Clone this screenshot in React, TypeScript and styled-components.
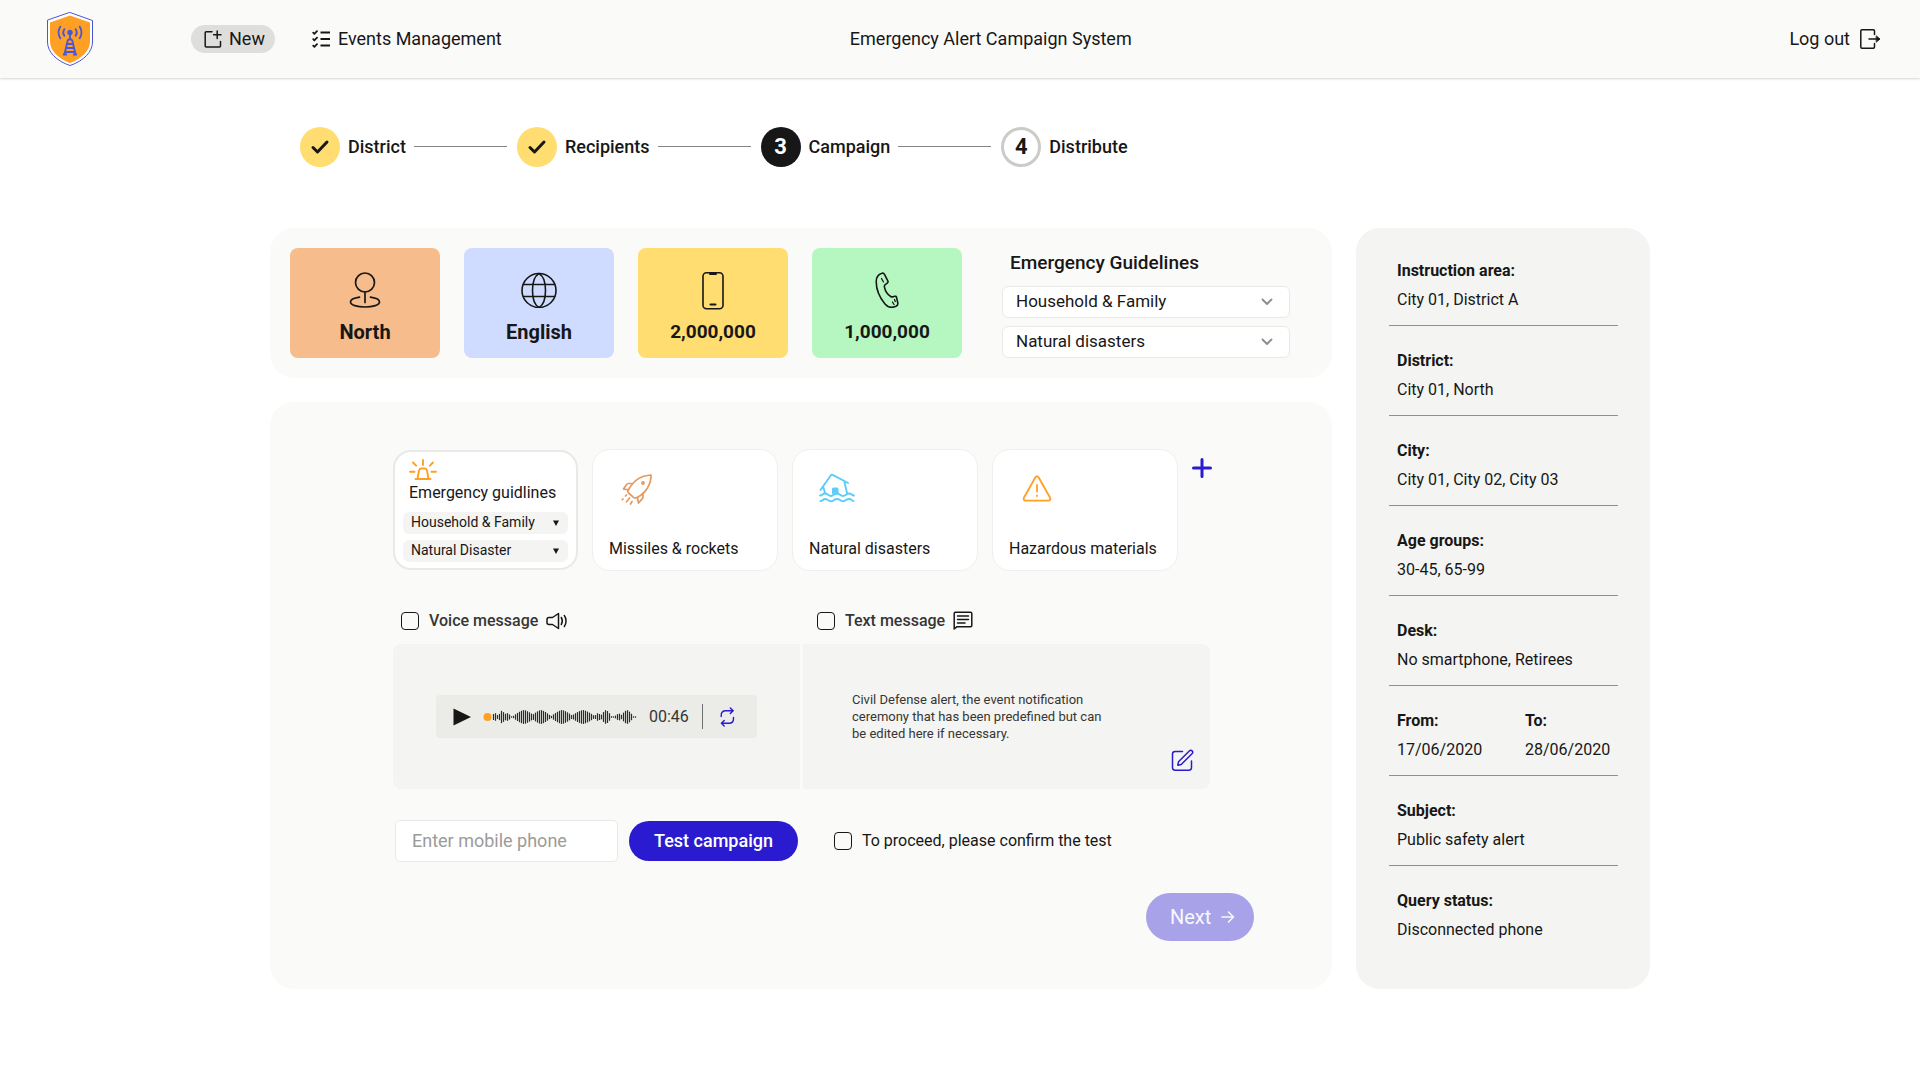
import React from "react";
import styled, { createGlobalStyle } from "styled-components";

const c = {
  ink: "#171717",
  soft: "#363635",
  panel: "#fafaf9",
  muted: "#f4f4f2",
  line: "#e9e9e7",
  rule: "#90908e",
  blue: "#2a1bd0",
  orange: "#ffa024",
};

const GlobalStyle = createGlobalStyle`
  *, *::before, *::after { box-sizing: border-box; }
  body {
    margin: 0;
    background: #ffffff;
    color: ${c.ink};
    font-family: Roboto, "Liberation Sans", sans-serif;
    font-size: 16px;
    line-height: 22px;
  }
  button, input, select { font: inherit; color: inherit; }
  h1, h2, p, dl, dd, dt, ol { margin: 0; padding: 0; }
  svg { display: block; flex: none; }
`;

/* ---------- Header ---------- */

const Header = styled.header`
  display: grid;
  grid-template-columns: 15fr auto 14fr;
  align-items: center;
  height: 78px;
  padding: 0 39px 0 47px;
  background: ${c.panel};
  box-shadow: 0 1px 2px rgba(0, 0, 0, 0.16);
  font-size: 18px;
`;

const Nav = styled.nav`
  display: flex;
  align-items: center;
`;

const LogoLink = styled.a`
  margin-right: 98px;
`;

const NavLink = styled.a<{ $active?: boolean }>`
  display: flex;
  align-items: center;
  gap: 7px;
  height: 28px;
  margin-right: 24px;
  padding: 0 10px 0 13px;
  border-radius: 14px;
  background: ${(p) => (p.$active ? "#dededc" : "transparent")};
  color: inherit;
  text-decoration: none;
`;

const Title = styled.h1`
  font-size: 18px;
  font-weight: 400;
`;

const LogOut = styled.button`
  display: flex;
  align-items: center;
  gap: 10px;
  justify-self: end;
  padding: 0;
  border: 0;
  background: none;
  cursor: pointer;
`;

/* ---------- Page ---------- */

const Page = styled.main`
  max-width: 1380px;
  margin: 0 auto;
  padding-bottom: 48px;
`;

const Steps = styled.ol`
  display: flex;
  align-items: center;
  gap: 10px;
  padding: 49px 30px 61px;
  list-style: none;
`;

const Step = styled.li`
  display: flex;
  align-items: center;
  gap: 8px;
  font-size: 18px;
  font-weight: 500;
`;

const StepLine = styled.span`
  width: 93px;
  height: 2px;
  border-top: 1px solid #858583;
`;

type StepState = "done" | "current" | "todo";

const StepBadge = styled.span<{ $state: StepState }>`
  display: grid;
  place-items: center;
  width: 40px;
  height: 40px;
  border-radius: 50%;
  border: ${(p) => (p.$state === "todo" ? "3px solid #cbcbc9" : "0")};
  background: ${(p) =>
    p.$state === "done" ? "#ffdd70" : p.$state === "current" ? c.ink : "#ffffff"};
  color: ${(p) => (p.$state === "current" ? "#ffffff" : c.ink)};
  font-size: 22px;
  font-weight: 700;
`;

const Layout = styled.div`
  display: grid;
  grid-template-columns: minmax(0, 1fr) 294px;
  gap: 24px;
`;

const Column = styled.div`
  display: flex;
  flex-direction: column;
  gap: 24px;
`;

/* ---------- Summary ---------- */

const Summary = styled.section`
  display: flex;
  gap: 24px;
  padding: 20px;
  border-radius: 24px;
  background: ${c.panel};
`;

const Tile = styled.div<{ $color: string; $count?: boolean }>`
  display: flex;
  flex-direction: column;
  align-items: center;
  gap: 13px;
  width: 150px;
  height: 110px;
  padding-top: 24px;
  border-radius: 8px;
  background: ${(p) => p.$color};
  font-size: ${(p) => (p.$count ? 19 : 20)}px;
  font-weight: 700;
`;

const Guidelines = styled.div`
  display: flex;
  flex-direction: column;
  gap: 8px;
  width: 288px;
  margin-left: 16px;
`;

const GuidelinesTitle = styled.h2`
  padding: 4px 8px;
  font-size: 19px;
  font-weight: 500;
`;

const SelectBox = styled.div`
  display: grid;
  align-items: center;

  & > * { grid-area: 1 / 1; }
  & > svg { justify-self: end; pointer-events: none; }
`;

const LargeSelectBox = styled(SelectBox)`
  & > svg { margin-right: 17px; }
`;

const LargeSelect = styled.select`
  appearance: none;
  width: 100%;
  height: 32px;
  padding: 0 40px 2px 13px;
  border: 1px solid ${c.line};
  border-radius: 6px;
  background: #ffffff;
  font-size: 17px;
`;

/* ---------- Campaign ---------- */

const Campaign = styled.section`
  flex: 1;
  padding: 47px 78px 48px 123px;
  border-radius: 24px;
  background: ${c.panel};
`;

const Scenarios = styled.div`
  display: flex;
  align-items: center;
  gap: 14px;
`;

const ScenarioCard = styled.button`
  display: flex;
  flex-direction: column;
  justify-content: space-between;
  align-items: flex-start;
  width: 186px;
  height: 122px;
  padding: 23px 16px 10px;
  border: 1px solid #efefed;
  border-radius: 18px;
  background: #ffffff;
  cursor: pointer;

  & > svg { margin-left: 10px; }
`;

const ActiveCard = styled.div`
  display: flex;
  flex-direction: column;
  width: 185px;
  height: 120px;
  padding: 7px 8px;
  border: 2px solid ${c.line};
  border-radius: 18px;
  background: #ffffff;
`;

const ActiveHead = styled.div`
  display: flex;
  flex-direction: column;
  gap: 1px;
  padding: 0 6px 8px;
`;

const SmallSelects = styled.div`
  display: flex;
  flex-direction: column;
  gap: 6px;
`;

const SmallSelectBox = styled(SelectBox)`
  & > svg { margin-right: 9px; }
`;

const SmallSelect = styled.select`
  appearance: none;
  width: 100%;
  height: 22px;
  padding: 0 22px 2px 8px;
  border: 0;
  border-radius: 6px;
  background: ${c.muted};
  font-size: 14px;
  line-height: 20px;
`;

const AddButton = styled.button`
  align-self: flex-start;
  margin-top: 8px;
  padding: 0;
  border: 0;
  background: none;
  cursor: pointer;
`;

const Messages = styled.div`
  display: grid;
  grid-template-columns: 1fr 1fr;
  column-gap: 3px;
  row-gap: 12px;
  margin: 39px 44px 31px 0;
`;

const CheckLabel = styled.label`
  display: flex;
  align-items: center;
  gap: 10px;
`;

const MessageHead = styled.div`
  display: flex;
  align-items: center;
  gap: 8px;
  padding-left: 8px;
  color: ${c.soft};
  font-weight: 500;

  & + & { padding-left: 14px; }
`;

const Check = styled.input`
  appearance: none;
  flex: none;
  width: 18px;
  height: 18px;
  margin: 0;
  border: 1px solid ${c.ink};
  border-radius: 4px;
  background: ${c.panel};

  &:checked { background: ${c.blue}; }
`;

const MessagePanel = styled.div<{ $side: "left" | "right" }>`
  display: flex;
  height: 145px;
  border-radius: ${(p) => (p.$side === "left" ? "8px 0 0 8px" : "0 8px 8px 0")};
  background: ${c.muted};
`;

const VoicePanel = styled(MessagePanel)`
  align-items: center;
  padding: 0 43px;
`;

const TextPanel = styled(MessagePanel)`
  align-items: flex-end;
  justify-content: space-between;
  padding: 0 16px 17px 49px;
`;

const MessageText = styled.p`
  align-self: center;
  width: 260px;
  padding-top: 17px;
  color: ${c.soft};
  font-size: 13px;
  line-height: 17px;
`;

const IconButton = styled.button`
  padding: 0;
  border: 0;
  background: none;
  cursor: pointer;
`;

const Player = styled.div`
  display: flex;
  align-items: center;
  width: 321px;
  height: 43px;
  padding: 0 22px 0 17px;
  border-radius: 4px;
  background: #ebebe7;
`;

const Time = styled.span`
  margin: 0 13px 0 12px;
  color: ${c.soft};
`;

const Divider = styled.span`
  width: 1px;
  height: 25px;
  margin-right: 17px;
  background: #6f6f6d;
`;

const WaveWrap = styled.div`
  margin-left: 12px;
`;

const TestRow = styled.form`
  display: flex;
  align-items: center;
  padding-left: 2px;
`;

const PhoneInput = styled.input`
  width: 223px;
  height: 42px;
  padding: 0 16px 2px;
  border: 1px solid ${c.line};
  border-radius: 5px;
  background: #ffffff;
  font-size: 18px;

  &::placeholder { color: #9b9b99; opacity: 1; }
`;

const TestButton = styled.button`
  width: 169px;
  height: 40px;
  margin: 0 36px 0 11px;
  border: 0;
  border-radius: 20px;
  background: ${c.blue};
  color: #ffffff;
  font-size: 18px;
  font-weight: 500;
  cursor: pointer;
`;

const NextRow = styled.div`
  display: flex;
  justify-content: flex-end;
  margin-top: 31px;
`;

const NextButton = styled.button`
  display: flex;
  align-items: center;
  gap: 10px;
  width: 108px;
  height: 48px;
  padding: 0 0 0 24px;
  border: 0;
  border-radius: 24px;
  background: #a8a2e8;
  color: #f8f8fd;
  font-size: 20px;
`;

/* ---------- Details ---------- */

const Details = styled.aside`
  padding: 8px 32px 34px 33px;
  border-radius: 24px;
  background: ${c.muted};
`;

const DetailRow = styled.dl`
  display: grid;
  grid-template-columns: 128px 1fr;
  padding: 24px 0 14px 8px;
  border-bottom: 1px solid ${c.rule};

  &:last-child { border-bottom: 0; }
`;

const DetailItem = styled.div<{ $wide: boolean }>`
  grid-column: ${(p) => (p.$wide ? "1 / -1" : "auto")};
`;

const DetailName = styled.dt`
  margin-bottom: 7px;
  font-weight: 700;
`;

const DetailValue = styled.dd`
  white-space: nowrap;
`;

/* ---------- Icons ---------- */

type IconProps = {
  w: number;
  h: number;
  color?: string;
  stroke?: number;
  children: React.ReactNode;
};

const Icon = ({ w, h, color = c.ink, stroke = 1.5, children }: IconProps) => (
  <svg
    width={w}
    height={h}
    viewBox={`0 0 ${w} ${h}`}
    fill="none"
    stroke={color}
    strokeWidth={stroke}
    strokeLinecap="round"
    strokeLinejoin="round"
    aria-hidden="true"
  >
    {children}
  </svg>
);

const Logo = () => (
  <Icon w={46} h={54} color="#4a56d6" stroke={1}>
    <path d="M23 .5 45.5 8.500V30c0 10-9 19-22.500 23.500C9.500 49 .5 40 .5 30V8.500z" fill="#fff" />
    <path d="M23 3.500 43 10.500V29.500c0 9-8 17-20 21.500C11 46.500 3 38.500 3 29.500V10.500z" fill={c.orange} stroke="none" />
    <circle cx="23" cy="20.5" r="2.7" fill="#4a56d6" stroke="none" />
    <path d="M17.800 16.500a6.500 6.500 0 0 0 0 8M28.200 16.500a6.500 6.500 0 0 1 0 8M13.700 14a11 11 0 0 0 0 13M32.300 14a11 11 0 0 1 0 13" strokeWidth="1.9" strokeLinecap="butt" />
    <path d="M23 22v6M21 27.500h4M21 27.500 17.500 42M25 27.500 28.500 42M20.500 32h5M19.500 36h7M18.500 40h9M16 42.500h4M26 42.500h4" strokeWidth="1.9" strokeLinecap="butt" />
  </Icon>
);

const NewIcon = () => (
  <Icon w={18} h={18}>
    <path d="M8 1.700H2.200c-.6 0-1 .4-1 1v13.200c0 .6.4 1 1 1h13.300c.6 0 1-.4 1-1V11.500M13.200 1v7.400M9.600 4.700h7.400" />
  </Icon>
);

const ChecklistIcon = () => (
  <Icon w={19} h={18} stroke={1.8}>
    <path d="M8.500 2.500H18M8.500 9H18M8.500 15.500H18" strokeLinecap="butt" />
    <path d="m1.200 2.600 1.200 1.200L5 1.200M1.200 9.100l1.200 1.200L5 7.700M1.200 15.600l1.200 1.200L5 14.200" />
  </Icon>
);

const LogOutIcon = () => (
  <Icon w={21} h={20}>
    <path d="M14.500 5.500V2c0-.8-.4-1.200-1.200-1.200H2C1.200.8.8 1.200.8 2v16c0 .8.4 1.200 1.200 1.200h11.300c.8 0 1.200-.4 1.200-1.200V14.500M9 10h10" />
    <path d="M16.500 7 20 10l-3.500 3z" fill={c.ink} strokeWidth=".8" />
  </Icon>
);

const TickIcon = () => (
  <Icon w={20} h={16} stroke={3}>
    <path d="m3 8.500 4.500 4.500L17 3" />
  </Icon>
);

const PinIcon = () => (
  <Icon w={32} h={36} stroke={1.7}>
    <circle cx="16" cy="10.5" r="9.5" />
    <path d="M16 20v10.500M10.500 25.200C5 26 1.500 27.700 1.500 30c0 3 6.500 5 14.500 5s14.500-2 14.500-5c0-2.300-3.500-4-9-4.800" />
  </Icon>
);

const GlobeIcon = () => (
  <Icon w={36} h={36} stroke={1.6}>
    <circle cx="18" cy="18.5" r="17" />
    <path d="M18 1.500C13.500 4 11.500 11 11.500 18.500S13.500 33 18 35.500M18 1.500c4.500 2.500 6.500 9.500 6.500 17S22.500 33 18 35.500M2.500 12.500h31M2.500 24.500h31" />
  </Icon>
);

const SmartphoneIcon = () => (
  <Icon w={22} h={38} stroke={1.6}>
    <rect x="1" y=".8" width="20" height="36" rx="3.5" />
    <path d="M8 2h6M8.500 32.500h5" strokeWidth="2" />
  </Icon>
);

const HandsetIcon = () => (
  <Icon w={24} h={36} stroke={1.6}>
    <path d="M1.200 9.500C1.200 5 3 2.500 7 1.300c1.200-.4 1.900 0 2.500 1l3.300 6.500c.5 1 .2 1.700-.6 2.300l-2 1.500c-.9.7-1 1.500-.7 2.700.8 3.700 3 7.200 6.200 9.200 1 .6 1.700.5 2.600.2l1.200-.4c1-.3 1.700 0 2 1l1.300 5.700c.3 1.700-.3 2.500-1.800 3.300-4.500 2-8.500.7-11-2.300C5 26 1.200 17.500 1.200 9.500z" />
    <path d="M6.500 6.500 8.500 10M17.500 30l1.500 2.500M19.500 27.500l.8 2" strokeWidth="1.3" />
  </Icon>
);

const TileIcon = styled.div`
  display: grid;
  place-items: center;
  height: 36px;
`;

const ChevronIcon = () => (
  <Icon w={12} h={8} color="#8c8c8a" stroke={1.8}>
    <path d="m1.500 1.500 4.500 4.500L10.500 1.500" />
  </Icon>
);

const CaretIcon = () => (
  <Icon w={6} h={6} stroke={0}>
    <path d="M0 .5h6L3 6z" fill={c.ink} />
  </Icon>
);

const SirenIcon = () => (
  <Icon w={28} h={22} color={c.orange} stroke={1.9}>
    <path d="M6.500 20h15M8.500 20l1.500-8.500c.3-1.400 1-2 2.200-2h3.600c1.200 0 1.900.6 2.200 2L19.500 20M14 1v5M4 3.500l3.200 3.200M24 3.500l-3.200 3.200M1 12.800h4.500M22.500 12.800H27" />
  </Icon>
);

const RocketIcon = () => (
  <Icon w={36} h={32} color="#e39a62" stroke={1.7}>
    <path d="M9 17.500C14 8 21 2.500 32 2c.3 9-5 18-14 22.500-1.500.8-2.500.6-3.500-.2L9.500 20c-.8-.8-1-1.500-.5-2.500z" />
    <path d="M13 10.500H9.500c-1 0-1.600.4-2.100 1.200L4.500 16 9.500 16.800M24 20v4c0 1-.3 1.500-1 2.200L19.500 30 18.500 24.500" />
    <circle cx="24" cy="10" r="1.1" />
    <path d="m7.500 22-1 1M4 26l-.7.7M10.500 25l-3 3.800M13 28.500 11.500 31" />
  </Icon>
);

const FloodIcon = () => (
  <Icon w={38} h={30} color="#5cccf8" stroke={1.9}>
    <path d="M1.500 17 11.700 2.500c.5-.8 1.200-1 2-.6L29 10M4.500 14.500 6 20M25.500 9.500 28 20" />
    <rect x="13" y="14.5" width="6.5" height="7" rx="1.5" fill="#5cccf8" stroke="none" />
    <path d="M1 22.500c2.500 0 2.500-2 5-2s3.500 2.500 6 2.500 3-2.500 6-2.500 3 2.500 6 2.500 3-2.500 6-2.500 2.500 2 5 2M1.500 28c2.500 0 2.300-2 4.500-2s3.500 2.200 6 2.200 3-2.200 6-2.200 3 2.200 6 2.200 3-2.200 6-2.200 2.500 2 4.500 2" />
  </Icon>
);

const HazardIcon = () => (
  <Icon w={38} h={30} color={c.orange} stroke={1.8}>
    <path d="M16.300 4.500c.9-1.400 2.500-1.400 3.400 0l11.400 20.300c.7 1.500 0 2.900-1.700 2.900H6.600c-1.700 0-2.400-1.400-1.700-2.900z" />
    <path d="M18 12v6.500M18 22.500v.5" />
  </Icon>
);

const PlusIcon = () => (
  <Icon w={22} h={22} color={c.blue} stroke={3}>
    <path d="M10 2.500v17M1.500 11h17" />
  </Icon>
);

const SpeakerIcon = () => (
  <Icon w={22} h={18}>
    <path d="M12.500 1.500 6.500 5.500H3C1.800 5.500 1 6.300 1 7.500v3c0 1.200.8 2 2 2h3.500l6 4zM15.300 5.500c1.200 2 1.200 5 0 7M18.300 3.500c2.300 3 2.300 8 0 11" />
  </Icon>
);

const ChatIcon = () => (
  <Icon w={20} h={20}>
    <path d="M1.200 18V2.500c0-.8.4-1.200 1.200-1.200h15.200c.8 0 1.200.4 1.200 1.200v12c0 .8-.4 1.200-1.200 1.200H4zM4.500 5h11M4.500 8.500h11M4.500 12h7.500" />
  </Icon>
);

const PlayIcon = () => (
  <Icon w={18} h={18} stroke={0}>
    <path d="M.5.5 18 9 .5 17.500z" fill={c.ink} />
  </Icon>
);

const RepeatIcon = () => (
  <Icon w={15} h={20} color={c.blue} stroke={1.4}>
    <path d="M1.200 9.500V8.500c0-3 1.800-4.800 4.500-4.800H13M10.300 1l2.900 2.700-2.900 2.800M13.500 10.500v1c0 3-1.800 4.800-4.500 4.800H1.500M4.200 13.500l-2.800 2.800L4.200 19" />
  </Icon>
);

const EditIcon = () => (
  <Icon w={23} h={23} color={c.blue}>
    <path d="M11.500 2.500H4.200C2.500 2.500 1.500 3.500 1.500 5v13.500c0 1.700 1 2.700 2.700 2.700h13.600c1.700 0 2.700-1 2.700-2.700V12" />
    <path d="M7.500 12.800 18.300 2c.9-.9 2-.9 2.800-.1.8.8.8 1.900-.1 2.800L10.200 15.500l-3.400.7z" />
  </Icon>
);

const ArrowIcon = () => (
  <Icon w={14} h={14} color="#f8f8fd" stroke={1.6}>
    <path d="M1 7h11.500M7.500 2l5 5-5 5" />
  </Icon>
);

/* Each burst of sound: centre, half width and loudness. */
const bursts = [
  [12, 4, 4],
  [19, 4, 6.5],
  [24, 5, 4],
  [41, 12, 7],
  [58, 11, 7],
  [79, 12, 7],
  [100, 13, 7],
  [115, 4, 4],
  [123, 6, 7],
  [136, 5, 3.5],
  [144, 7, 7],
];

const bars = Array.from({ length: 72 }, (_, i) => {
  const x = 10.5 + i * 2;
  const level = Math.max(
    0.7,
    ...bursts.map(([mid, half, loud]) => loud * (1 - Math.pow(Math.abs(x - mid) / half, 1.4)))
  );
  return { x, level };
});

const Waveform = () => (
  <Icon w={154} h={16} color="#2c2c2a" stroke={1.2}>
    {bars.map(({ x, level }) => (
      <path key={x} d={`M${x} ${8 - level}V${8 + level}`} strokeLinecap="butt" />
    ))}
    <circle cx="4.5" cy="8" r="4" fill={c.orange} stroke="none" />
  </Icon>
);

/* ---------- Data ---------- */

const steps: { label: string; state: StepState }[] = [
  { label: "District", state: "done" },
  { label: "Recipients", state: "done" },
  { label: "Campaign", state: "current" },
  { label: "Distribute", state: "todo" },
];

const tiles = [
  { label: "North", color: "#f6bc8b", icon: <PinIcon /> },
  { label: "English", color: "#cfdcff", icon: <GlobeIcon /> },
  { label: "2,000,000", color: "#ffdd70", icon: <SmartphoneIcon />, count: true },
  { label: "1,000,000", color: "#b6f7c1", icon: <HandsetIcon />, count: true },
];

const scenarios = [
  { label: "Missiles & rockets", icon: <RocketIcon /> },
  { label: "Natural disasters", icon: <FloodIcon /> },
  { label: "Hazardous materials", icon: <HazardIcon /> },
];

const details = [
  [["Instruction area:", "City 01, District A"]],
  [["District:", "City 01, North"]],
  [["City:", "City 01, City 02, City 03"]],
  [["Age groups:", "30-45, 65-99"]],
  [["Desk:", "No smartphone, Retirees"]],
  [["From:", "17/06/2020"], ["To:", "28/06/2020"]],
  [["Subject:", "Public safety alert"]],
  [["Query status:", "Disconnected phone"]],
];

export default function App() {
  return (
    <>
      <GlobalStyle />
      <Header>
        <Nav>
          <LogoLink href="#home" aria-label="Home"><Logo /></LogoLink>
          <NavLink href="#new" $active><NewIcon />New</NavLink>
          <NavLink href="#events"><ChecklistIcon />Events Management</NavLink>
        </Nav>
        <Title>Emergency Alert Campaign System</Title>
        <LogOut type="button">Log out<LogOutIcon /></LogOut>
      </Header>

      <Page>
        <Steps>
          {steps.map((step, i) => (
            <Step key={step.label}>
              <StepBadge $state={step.state}>
                {step.state === "done" ? <TickIcon /> : i + 1}
              </StepBadge>
              {step.label}
              {i < steps.length - 1 && <StepLine />}
            </Step>
          ))}
        </Steps>

        <Layout>
          <Column>
            <Summary>
              {tiles.map((tile) => (
                <Tile key={tile.label} $color={tile.color} $count={tile.count}>
                  <TileIcon>{tile.icon}</TileIcon>
                  <span>{tile.label}</span>
                </Tile>
              ))}
              <Guidelines>
                <GuidelinesTitle>Emergency Guidelines</GuidelinesTitle>
                <LargeSelectBox>
                  <LargeSelect aria-label="Audience">
                    <option>Household &amp; Family</option>
                  </LargeSelect>
                  <ChevronIcon />
                </LargeSelectBox>
                <LargeSelectBox>
                  <LargeSelect aria-label="Event type">
                    <option>Natural disasters</option>
                  </LargeSelect>
                  <ChevronIcon />
                </LargeSelectBox>
              </Guidelines>
            </Summary>

            <Campaign>
              <Scenarios>
                <ActiveCard>
                  <ActiveHead>
                    <SirenIcon />
                    <span>Emergency guidlines</span>
                  </ActiveHead>
                  <SmallSelects>
                    <SmallSelectBox>
                      <SmallSelect aria-label="Guideline audience">
                        <option>Household &amp; Family</option>
                      </SmallSelect>
                      <CaretIcon />
                    </SmallSelectBox>
                    <SmallSelectBox>
                      <SmallSelect aria-label="Guideline event">
                        <option>Natural Disaster</option>
                      </SmallSelect>
                      <CaretIcon />
                    </SmallSelectBox>
                  </SmallSelects>
                </ActiveCard>
                {scenarios.map((item) => (
                  <ScenarioCard key={item.label} type="button">
                    {item.icon}
                    <span>{item.label}</span>
                  </ScenarioCard>
                ))}
                <AddButton type="button" aria-label="Add scenario"><PlusIcon /></AddButton>
              </Scenarios>

              <Messages>
                <MessageHead>
                  <CheckLabel><Check type="checkbox" />Voice message</CheckLabel>
                  <SpeakerIcon />
                </MessageHead>
                <MessageHead>
                  <CheckLabel><Check type="checkbox" />Text message</CheckLabel>
                  <ChatIcon />
                </MessageHead>
                <VoicePanel $side="left">
                  <Player>
                    <IconButton type="button" aria-label="Play"><PlayIcon /></IconButton>
                    <WaveWrap><Waveform /></WaveWrap>
                    <Time>00:46</Time>
                    <Divider />
                    <IconButton type="button" aria-label="Repeat"><RepeatIcon /></IconButton>
                  </Player>
                </VoicePanel>
                <TextPanel $side="right">
                  <MessageText>
                    Civil Defense alert, the event notification ceremony that has been
                    predefined but can be edited here if necessary.
                  </MessageText>
                  <IconButton type="button" aria-label="Edit message"><EditIcon /></IconButton>
                </TextPanel>
              </Messages>

              <TestRow>
                <PhoneInput type="tel" placeholder="Enter mobile phone" aria-label="Mobile phone" />
                <TestButton type="button">Test campaign</TestButton>
                <CheckLabel>
                  <Check type="checkbox" />
                  To proceed, please confirm the test
                </CheckLabel>
              </TestRow>

              <NextRow>
                <NextButton type="button">Next<ArrowIcon /></NextButton>
              </NextRow>
            </Campaign>
          </Column>

          <Details>
            {details.map((row) => (
              <DetailRow key={row[0][0]}>
                {row.map(([name, value]) => (
                  <DetailItem key={name} $wide={row.length === 1}>
                    <DetailName>{name}</DetailName>
                    <DetailValue>{value}</DetailValue>
                  </DetailItem>
                ))}
              </DetailRow>
            ))}
          </Details>
        </Layout>
      </Page>
    </>
  );
}
